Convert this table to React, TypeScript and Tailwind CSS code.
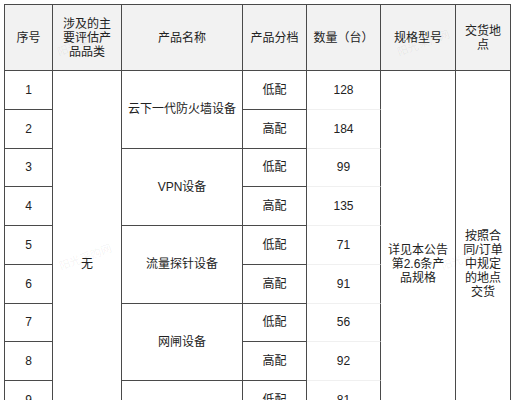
const rows = [
  { no: 1, name: '云下一代防火墙设备', level: '低配', qty: 128 },
  { no: 2, level: '高配', qty: 184 },
  { no: 3, name: 'VPN设备', level: '低配', qty: 99 },
  { no: 4, level: '高配', qty: 135 },
  { no: 5, name: '流量探针设备', level: '低配', qty: 71 },
  { no: 6, level: '高配', qty: 91 },
  { no: 7, name: '网闸设备', level: '低配', qty: 56 },
  { no: 8, level: '高配', qty: 92 },
  { no: 9, name: '日志审计设备', level: '低配', qty: 81 },
  { no: 10, level: '高配', qty: 64 },
];

const cell = 'border-r border-b border-[#4a4a4a] px-[6px] text-center align-middle';
const head = cell + ' bg-[#f2f2f2]';

function Watermark({ className }: { className: string }) {
  return (
    <span className={'pointer-events-none absolute rotate-[-20deg] whitespace-nowrap text-[11px] text-black/[0.06] ' + className}>
      阳光采购网
    </span>
  );
}

export default function App() {
  return (
    <div
      className="relative bg-white pl-[4px] pt-[4px] text-[12px] leading-[14px] text-[#222]"
      style={{ fontFamily: '"Liberation Sans", "Noto Sans CJK SC", sans-serif' }}
    >
      <table className="w-[506px] table-fixed border-separate border-spacing-0 border-l border-t border-[#4a4a4a]">
        <colgroup>
          <col className="w-[48px]" />
          <col className="w-[69px]" />
          <col className="w-[121px]" />
          <col className="w-[64px]" />
          <col className="w-[74px]" />
          <col className="w-[75px]" />
          <col className="w-[55px]" />
        </colgroup>
        <thead>
          <tr className="h-[66px]">
            <th className={head + ' font-normal'}>序号</th>
            <th className={head + ' font-normal'}>涉及的主要评估产品品类</th>
            <th className={head + ' font-normal'}>产品名称</th>
            <th className={head + ' font-normal'}>产品分档</th>
            <th className={head + ' font-normal'}>数量（台）</th>
            <th className={head + ' font-normal'}>规格型号</th>
            <th className={head + ' font-normal'}>交货地点</th>
          </tr>
        </thead>
        <tbody>
          {rows.map((r, i) => (
            <tr key={r.no} className="h-[38.75px]">
              <td className={cell}>{r.no}</td>
              {i === 0 && (
                <td rowSpan={10} className={cell}>
                  无
                </td>
              )}
              {r.name && (
                <td rowSpan={2} className={cell}>
                  {r.name}
                </td>
              )}
              <td className={cell}>{r.level}</td>
              <td className="border-r border-b border-r-[#4a4a4a] border-b-[#f0f0f0] px-[6px] text-center align-middle">
                {r.qty}
              </td>
              {i === 0 && (
                <>
                  <td rowSpan={10} className={cell}>
                    详见本公告第2.6条产品规格
                  </td>
                  <td rowSpan={10} className={cell}>
                    按照合同/订单中规定的地点交货
                  </td>
                </>
              )}
            </tr>
          ))}
        </tbody>
      </table>

      <Watermark className="left-[56px] top-[36px]" />
      <Watermark className="left-[396px] top-[36px]" />
      <Watermark className="left-[58px] top-[250px]" />
      <Watermark className="left-[440px] top-[250px]" />
    </div>
  );
}
